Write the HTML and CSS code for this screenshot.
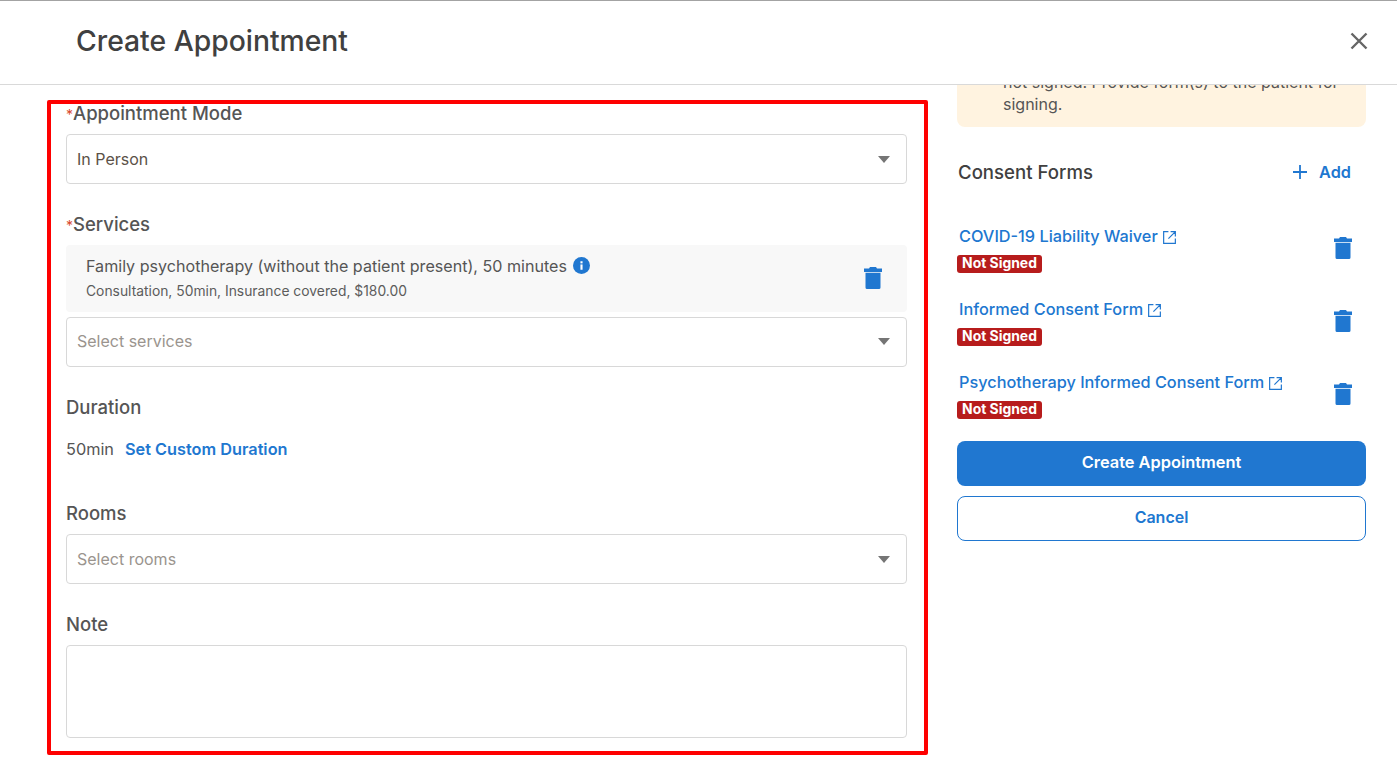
FILE: index.html
```html
<!DOCTYPE html>
<html lang="en">
<head>
<meta charset="utf-8">
<title>Create Appointment</title>
<link rel="stylesheet" href="styles.css">
</head>
<body>
<header class="header">
  <h1 class="title">Create Appointment</h1>
  <svg class="close" viewBox="0 0 18 18" aria-label="Close"><path d="M1.5 1.5l15 15M16.5 1.5l-15 15"/></svg>
</header>
<main class="main">
  <section class="form">
    <label class="label"><span class="req">*</span>Appointment Mode</label>
    <div class="select"><span class="value">In Person</span><i class="caret"></i></div>

    <label class="label gap"><span class="req">*</span>Services</label>
    <div class="service">
      <div class="service-text">
        <div class="service-name">Family psychotherapy (without the patient present), 50 minutes
          <svg class="info" viewBox="0 0 16 16"><circle cx="8" cy="8" r="8"/><rect x="7" y="7" width="2" height="5" fill="#fff"/><rect x="7" y="4" width="2" height="2" fill="#fff"/></svg>
        </div>
        <div class="service-sub">Consultation, 50min, Insurance covered, $180.00</div>
      </div>
      <svg class="trash" viewBox="0 0 18 22"><path d="M6 0h6l1 1.6h5V5H0V1.6h5zM1.5 5.8h15v14.7a1.5 1.5 0 0 1-1.5 1.5H3a1.5 1.5 0 0 1-1.5-1.5z"/></svg>
    </div>
    <div class="select after-card"><span class="placeholder">Select services</span><i class="caret"></i></div>

    <label class="label gap">Duration</label>
    <div class="duration"><span>50min</span><a class="link">Set Custom Duration</a></div>

    <label class="label rooms">Rooms</label>
    <div class="select"><span class="placeholder">Select rooms</span><i class="caret"></i></div>

    <label class="label gap">Note</label>
    <div class="note"></div>
  </section>

  <aside class="side">
    <div class="warning"><p>not signed. Provide form(s) to the patient for signing.</p></div>
    <div class="consent-head">
      <h2 class="consent-title">Consent Forms</h2>
      <a class="add"><svg viewBox="0 0 14 14"><path d="M7 0v14M0 7h14"/></svg>Add</a>
    </div>
    <ul class="forms">
      <li class="form-item">
        <div class="form-info">
          <a class="form-link">COVID-19 Liability Waiver<svg class="ext" viewBox="0 0 12 12"><path d="M5 .6H.6v10.8h10.8V7M7 .6h4.4V5M11.2.8L5 7"/></svg></a>
          <span class="badge">Not Signed</span>
        </div>
        <svg class="trash" viewBox="0 0 18 22"><path d="M6 0h6l1 1.6h5V5H0V1.6h5zM1.5 5.8h15v14.7a1.5 1.5 0 0 1-1.5 1.5H3a1.5 1.5 0 0 1-1.5-1.5z"/></svg>
      </li>
      <li class="form-item">
        <div class="form-info">
          <a class="form-link">Informed Consent Form<svg class="ext" viewBox="0 0 12 12"><path d="M5 .6H.6v10.8h10.8V7M7 .6h4.4V5M11.2.8L5 7"/></svg></a>
          <span class="badge">Not Signed</span>
        </div>
        <svg class="trash" viewBox="0 0 18 22"><path d="M6 0h6l1 1.6h5V5H0V1.6h5zM1.5 5.8h15v14.7a1.5 1.5 0 0 1-1.5 1.5H3a1.5 1.5 0 0 1-1.5-1.5z"/></svg>
      </li>
      <li class="form-item">
        <div class="form-info">
          <a class="form-link">Psychotherapy Informed Consent Form<svg class="ext" viewBox="0 0 12 12"><path d="M5 .6H.6v10.8h10.8V7M7 .6h4.4V5M11.2.8L5 7"/></svg></a>
          <span class="badge">Not Signed</span>
        </div>
        <svg class="trash" viewBox="0 0 18 22"><path d="M6 0h6l1 1.6h5V5H0V1.6h5zM1.5 5.8h15v14.7a1.5 1.5 0 0 1-1.5 1.5H3a1.5 1.5 0 0 1-1.5-1.5z"/></svg>
      </li>
    </ul>
    <button class="btn primary">Create Appointment</button>
    <button class="btn secondary">Cancel</button>
  </aside>
</main>
<div class="highlight"></div>
</body>
</html>
```
FILE: styles.css
```css
* { box-sizing: border-box; }
html, body { height: 100%; }
body {
  margin: 0;
  overflow: hidden;
  background: #fff;
  color: #555;
  font-family: "Inter", "Liberation Sans", sans-serif;
  font-size: 16px;
  position: relative;
}
.header {
  height: 85px;
  border-top: 1px solid #a3a3a3;
  border-bottom: 1px solid #d9d9d9;
  padding: 0 29px 0 76px;
  display: flex;
  align-items: center;
  justify-content: space-between;
}
.title { margin: 0 0 3px; font-size: 28.3px; font-weight: 500; color: #404040; }
.close { width: 18px; height: 18px; margin-bottom: 3px; fill: none; stroke: #666; stroke-width: 2.4; }
.main {
  display: flex;
  gap: 50px;
  padding-left: 66px;
}
.form { width: 841px; padding-top: 17px; display: flex; flex-direction: column; }
.label { display: block; height: 22px; line-height: 22px; margin-bottom: 10px; font-size: 18.5px; font-weight: 500; color: #555; }
.label.gap { margin-top: 29px; }
.label.rooms { margin-top: 42px; }
.req { color: #d8482c; font-size: 14px; font-weight: 400; }
.select {
  height: 50px;
  border: 1px solid #d8d8d8;
  border-radius: 4px;
  padding: 0 16px 0 10px;
  display: flex;
  align-items: center;
  justify-content: space-between;
}
.after-card { margin-top: 5px; padding-bottom: 2px; }
.value { color: #5b5147; }
.placeholder { color: #9a948e; }
.caret {
  width: 0; height: 0;
  border-left: 6.5px solid transparent;
  border-right: 6.5px solid transparent;
  border-top: 7px solid #757575;
}
.service {
  height: 67px;
  background: #f8f8f8;
  border-radius: 4px;
  padding: 0 25px 0 20px;
  display: flex;
  align-items: center;
  justify-content: space-between;
}
.service-text { margin-bottom: 3px; }
.service-name { line-height: 22px; font-size: 16.1px; color: #555; display: flex; align-items: center; gap: 6px; }
.service-sub { font-size: 13.85px; line-height: 18px; margin-top: 5px; color: #5c5c5c; }
.info { width: 17px; height: 17px; fill: #2077d0; }
.trash { width: 18px; height: 22px; fill: #2077d0; flex: none; margin-bottom: 2px; }
.duration { margin-top: 10px; height: 22px; line-height: 22px; display: flex; gap: 11px; font-size: 16.3px; }
.link { color: #2077d0; font-weight: 600; }
.note { height: 93px; border: 1px solid #d8d8d8; border-radius: 4px; }
.side { width: 409px; display: flex; flex-direction: column; }
.warning {
  height: 42px;
  background: #fff3e0;
  border-radius: 0 0 8px 8px;
  padding: 0 20px 12px 46px;
  overflow: hidden;
  display: flex;
  flex-direction: column;
  justify-content: flex-end;
  flex: none;
}
.warning p { margin: 0; line-height: 22px; color: #555; }
.consent-head {
  margin-top: 34px;
  height: 22px;
  display: flex;
  align-items: center;
  justify-content: space-between;
  padding-right: 15px;
}
.consent-title { margin: 0; padding-left: 1px; font-size: 18.6px; font-weight: 500; color: #404040; }
.add { display: flex; align-items: center; gap: 12px; color: #2077d0; font-size: 16.3px; font-weight: 600; }
.add svg { width: 14px; height: 14px; fill: none; stroke: #2077d0; stroke-width: 1.8; }
.forms { list-style: none; margin: 42px 0 0; padding: 0; display: flex; flex-direction: column; gap: 25px; }
.form-item { height: 48px; display: flex; align-items: center; justify-content: space-between; padding-right: 14px; }
.form-info { display: flex; flex-direction: column; align-items: flex-start; gap: 8px; }
.form-link { padding-left: 2px; height: 22px; line-height: 22px; color: #2077d0; font-size: 16.3px; font-weight: 500; display: flex; align-items: center; gap: 5px; }
.ext { width: 13px; height: 13px; margin-top: 2px; fill: none; stroke: #2077d0; stroke-width: 1.1; }
.badge {
  height: 18px;
  width: 85px;
  line-height: 17px;
  text-align: center;
  background: #b71c1c;
  color: #fff;
  border-radius: 3px;
  font-size: 13.9px;
  font-weight: 700;
}
.btn {
  display: block;
  width: 100%;
  height: 45px;
  padding: 0 0 3px;
  border-radius: 8px;
  font: 600 16.4px "Inter", "Liberation Sans", sans-serif;
  flex: none;
}
.primary { margin-top: 22px; background: #2077d0; border: 0; color: #fff; }
.secondary { margin-top: 10px; background: #fff; border: 1px solid #2077d0; color: #2077d0; font-size: 16px; }
.highlight {
  position: absolute;
  left: 47px;
  top: 100px;
  width: 881px;
  height: 655px;
  border: 4px solid #fe0000;
  border-radius: 2px;
  pointer-events: none;
}
```
